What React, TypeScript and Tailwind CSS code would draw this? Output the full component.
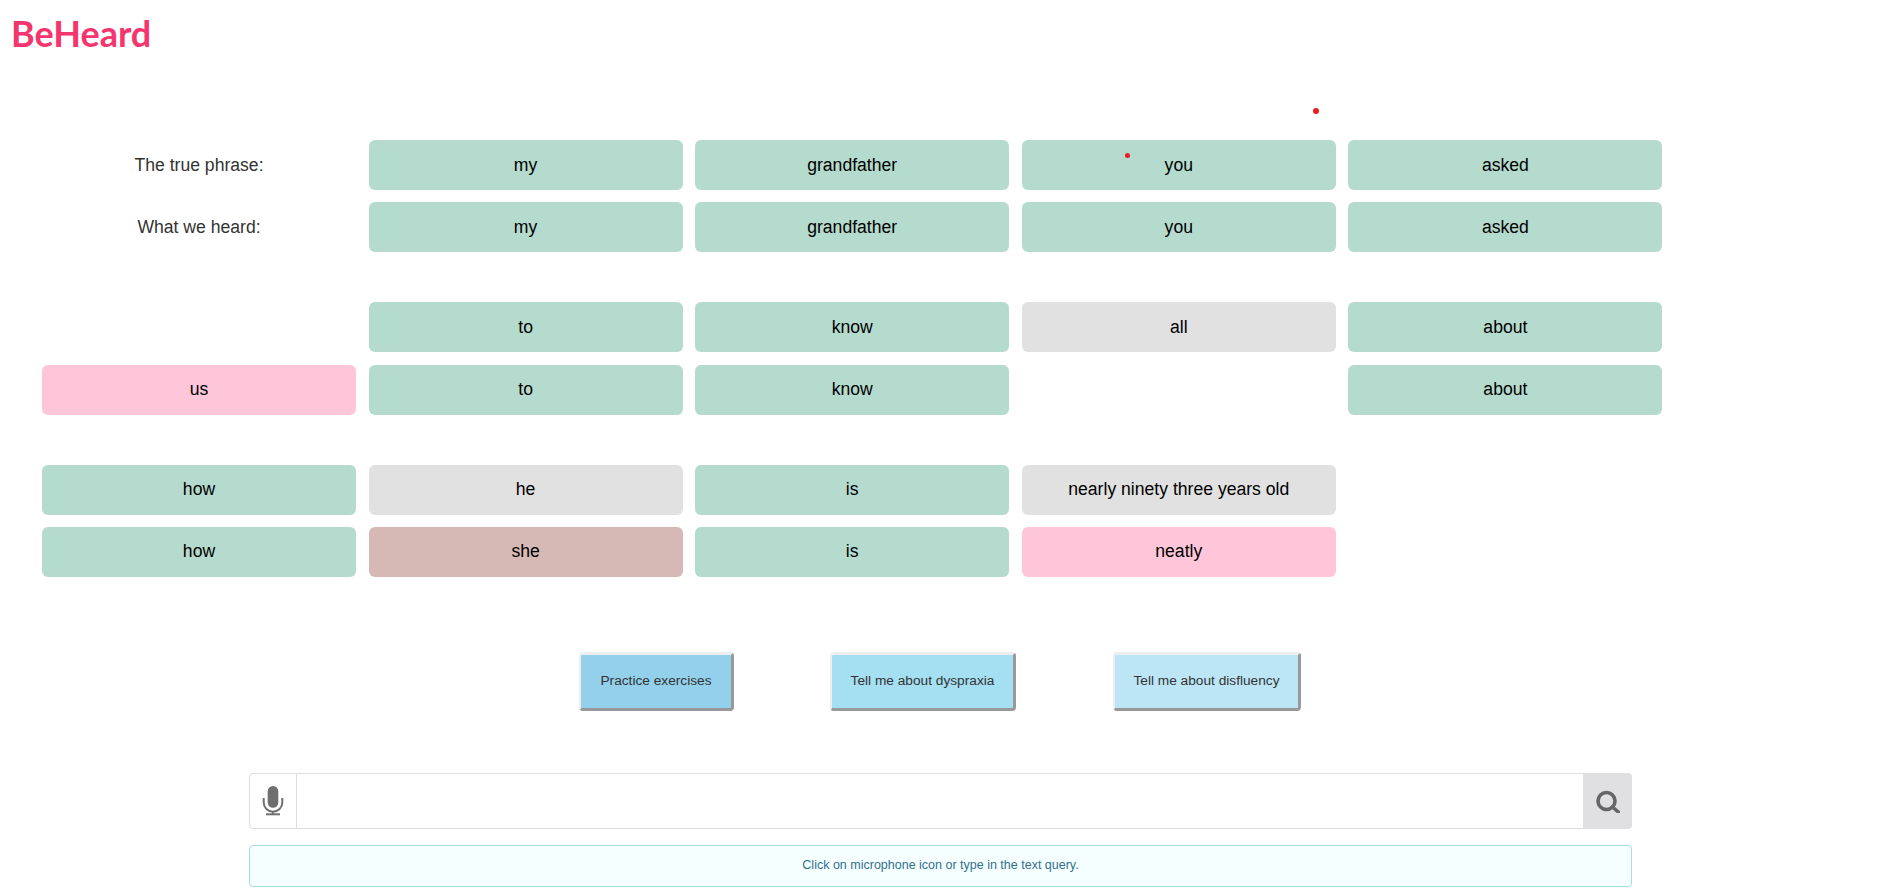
type Cell = { text: string; tone: "match" | "missing" | "extra" | "wrong" | "none" };

const toneClass = {
  match: "bg-[#b4dbcd]",
  missing: "bg-[#e1e1e1]",
  extra: "bg-[#ffc6d9]",
  wrong: "bg-[#d6b9b5]",
  none: "",
};

const m = (text: string): Cell => ({ text, tone: "match" });
const g = (text: string): Cell => ({ text, tone: "missing" });
const blank: Cell = { text: "", tone: "none" };

const groups: { gap: string; rows: { label?: string; nudge?: boolean; cells: Cell[] }[] }[] = [
  {
    gap: "gap-3",
    rows: [
      { label: "The true phrase:", cells: [m("my"), m("grandfather"), m("you"), m("asked")] },
      { label: "What we heard:", cells: [m("my"), m("grandfather"), m("you"), m("asked")] },
    ],
  },
  {
    gap: "gap-[13px]",
    rows: [
      { cells: [blank, m("to"), m("know"), g("all"), m("about")] },
      { nudge: true, cells: [{ text: "us", tone: "extra" }, m("to"), m("know"), blank, m("about")] },
    ],
  },
  {
    gap: "gap-3",
    rows: [
      { nudge: true, cells: [m("how"), g("he"), m("is"), g("nearly ninety three years old"), blank] },
      {
        nudge: true,
        cells: [
          m("how"),
          { text: "she", tone: "wrong" },
          m("is"),
          { text: "neatly", tone: "extra" },
          blank,
        ],
      },
    ],
  },
];

const Word = ({ cell, nudge }: { cell: Cell; nudge?: boolean }) => (
  <div className={`h-[50px] rounded-md flex items-center justify-center text-black ${nudge ? "pb-[2px]" : ""} ${toneClass[cell.tone]}`}>
    {cell.text}
  </div>
);

const ActionButton = ({ label, className }: { label: string; className: string }) => (
  <button
    className={`h-[59px] rounded-[4px] border-t-[3px] border-l-[2px] border-r-[3px] border-b-[3px] border-t-[#eeeeee] border-l-[#eeeeee] border-r-[#999999] border-b-[#999999] text-[13.7px] text-[#333] ${className}`}
  >
    {label}
  </button>
);

const MicIcon = () => (
  <svg width="24" height="32" viewBox="0 0 24 32" className="text-[#6f6f6f]">
    <rect x="6.7" y="1" width="10.6" height="21.7" rx="5.3" fill="currentColor" />
    <path d="M2.7 13v4.5a9.3 9.3 0 0 0 18.6 0V13M12 27v2" fill="none" stroke="currentColor" strokeWidth="2" />
    <rect x="5" y="28.3" width="14" height="2" fill="currentColor" />
  </svg>
);

const SearchIcon = () => (
  <svg width="24" height="24" viewBox="0 0 24 24" className="text-[#666]">
    <circle cx="10.5" cy="12" r="8.5" fill="none" stroke="currentColor" strokeWidth="3.6" />
    <path d="M16.5 18l5.8 5" fill="none" stroke="currentColor" strokeWidth="3.6" strokeLinecap="round" />
  </svg>
);

export default function App() {
  return (
    <div className="relative w-[1881px] h-[895px] overflow-hidden bg-white font-['Liberation_Sans',sans-serif] text-[17.6px] text-[#333]">
      <div className="pl-[11px] pt-[11px] h-[140px]">
        <h1 className="font-['Lato',sans-serif] font-bold text-[36px] leading-[44px] text-[#f5356e]">BeHeard</h1>
      </div>

      <div className="pl-[42px] flex flex-col gap-[50px]">
        {groups.map((group, i) => (
          <div key={i} className={`flex flex-col ${group.gap}`}>
            {group.rows.map((row, j) => (
              <div key={j} className="grid grid-cols-[314px_314px_314px_314px_314px] gap-x-[12.6px]">
                {row.label && <div className="h-[50px] flex items-center justify-center">{row.label}</div>}
                {row.cells.map((cell, k) => (
                  <Word key={k} cell={cell} nudge={row.nudge} />
                ))}
              </div>
            ))}
          </div>
        ))}
      </div>

      <div className="mt-[75px] pl-[579px] flex">
        <ActionButton label="Practice exercises" className="w-[155px] bg-[#92d0eb]" />
        <ActionButton label="Tell me about dyspraxia" className="ml-[96px] w-[186px] bg-[#a5dff2]" />
        <ActionButton label="Tell me about disfluency" className="ml-[97px] w-[188px] bg-[#bce6f5]" />
      </div>

      <div className="mt-[62px] ml-[249px] w-[1383px]">
        <div className="h-[56px] flex">
          <div className="w-[48px] rounded-l border border-[#dddddd] flex items-center justify-center">
            <MicIcon />
          </div>
          <div className="flex-1 border-y border-[#dddddd]" />
          <div className="w-[49px] rounded-r bg-[#e0e0e2] flex items-center justify-center">
            <SearchIcon />
          </div>
        </div>
        <div className="mt-4 h-[42px] pb-[2px] rounded border border-[#a8dbe4] bg-[#f6ffff] flex items-center justify-center text-[12.5px] text-[#31708f]">
          Click on microphone icon or type in the text query.
        </div>
      </div>

      <span className="absolute left-[1313px] top-[108px] w-[6px] h-[6px] rounded-full bg-[#ed1c24]" />
      <span className="absolute left-[1125px] top-[153px] w-[5px] h-[5px] rounded-full bg-[#ed1c24]" />
    </div>
  );
}
